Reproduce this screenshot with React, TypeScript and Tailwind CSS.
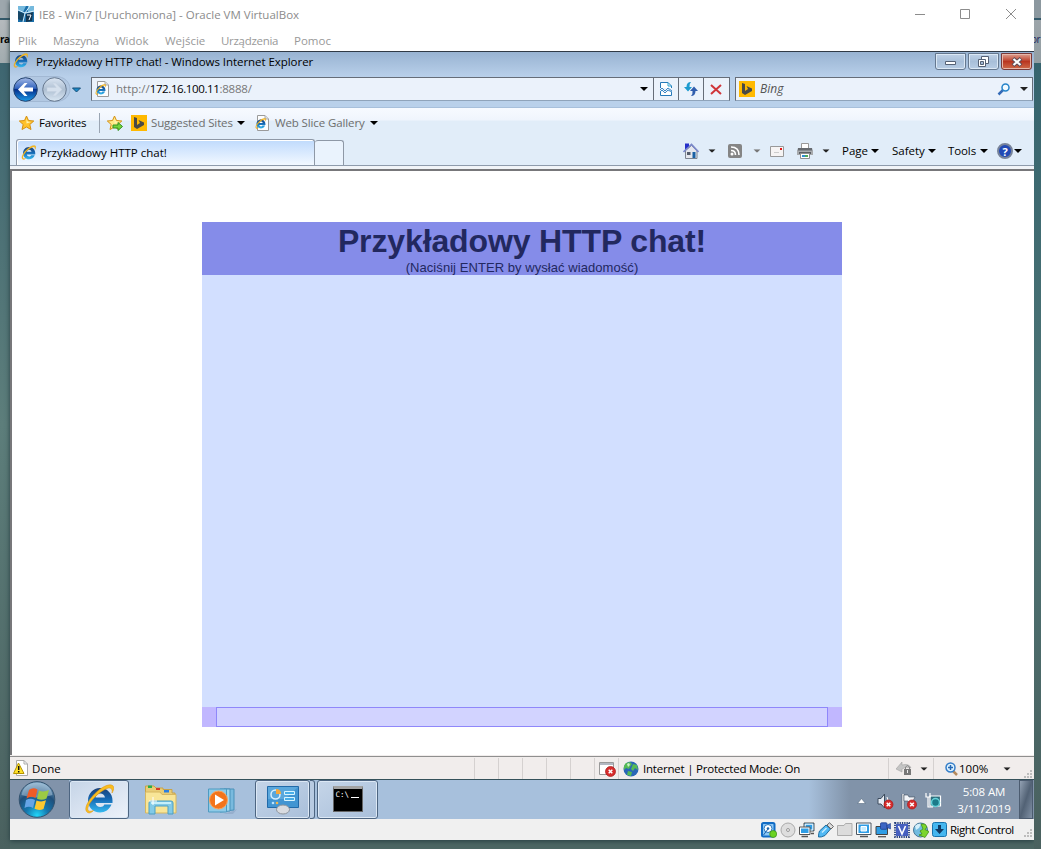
import React from "react";

type P = { className?: string };

const Svg = ({ w, h, className = "", children }: { w: number; h: number; className?: string; children: React.ReactNode }) => (
  <svg width={w} height={h} viewBox={`0 0 ${w} ${h}`} className={`block shrink-0 ${className}`}>{children}</svg>
);

const Caret = ({ className = "" }: P) => (
  <Svg w={8} h={4} className={className}><path d="M0 0H8L4 4Z" fill="currentColor" /></Svg>
);

const IeLogo = ({ size = 15, className = "" }: { size?: number; className?: string }) => (
  <svg width={size} height={size} viewBox="0 0 30 30" className={`block shrink-0 ${className}`}>
    <defs>
      <linearGradient id="ieb" x1="0" y1="0" x2="0" y2="1">
        <stop offset="0" stopColor="#1c4076" /><stop offset=".45" stopColor="#1568b4" /><stop offset="1" stopColor="#35baf0" />
      </linearGradient>
    </defs>
    <path d="M27.500 20.500C25.500 25.500 21 28.500 16 28.500C9 28.500 4 23 4 16.500S9 4 16 4S28.500 9.500 28.500 16.500V19H11.500C12 21.500 14 23 16.300 23C18.200 23 19.500 22.300 20.300 20.500ZM11.500 13.500H21C20.500 11 18.500 9.500 16.300 9.500S12 11 11.500 13.500Z" fill="url(#ieb)" />
    <path d="M5 29C-1.500 27.500 2.500 18 11 9.500S28 -1.500 29.700 3C30 5 29.300 7 28 9C28.600 5 27 3 23 4.500C15 7.500 5 18 3.800 24C3.400 27.300 6 28 9.500 26.500C8 28 6.500 29 5 29Z" fill="#f9bd20" stroke="#dc930c" strokeWidth=".5" />
  </svg>
);

const PageIe = ({ className = "" }: P) => (
  <span className={`relative block h-[16px] w-[15px] shrink-0 ${className}`}>
    <Svg w={15} h={16}><path d="M2.500 .5H10L13.500 4V15.500H2.500Z" fill="#fdfdfd" stroke="#9a9a9a" /><path d="M10 .5V4H13.500" fill="#ddd" stroke="#aaa" /></Svg>
    <IeLogo size={11} className="absolute left-0 top-[3px]" />
  </span>
);

const Bing = ({ className = "" }: P) => (
  <Svg w={16} h={16} className={className}><path d="M0 0H16V16H0Z" fill="#ffb900" /><path d="M3 2L6 3V10L9 8L7.500 5L13 7.500V10L6 14L3 12Z" fill="#4a4a46" /></Svg>
);

const Star = ({ className = "", add = false }: P & { add?: boolean }) => (
  <Svg w={16} h={16} className={className}>
    <path d="M7.500 1L9.500 5.500L14.800 6L10.800 9.500L12 14.500L7.500 12L3 14.500L4.200 9.500L.3 6L5.500 5.500Z" fill={add ? "#ffe987" : "#ffc22c"} stroke="#d59113" />
    <path d="M7.500 3L8.600 6.500L12 7L7.500 8.500Z" fill="#fff3ae" />
    {add && <path d="M6 10H11V7.500L15.500 11.500L11 15.500V13H6Z" fill="#76d33b" stroke="#319323" />}
  </Svg>
);

const RedX = ({ x, y, r = 4.500 }: { x: number; y: number; r?: number }) => (
  <g transform={`translate(${x} ${y})`}><circle r={r} fill="#d62c2c" stroke="#a81515" strokeWidth=".7" /><path d="M-1.800 -1.800L1.800 1.800M1.800 -1.800L-1.800 1.800" stroke="#fff" strokeWidth="1.500" /></g>
);

const Grip = ({ className = "" }: P) => (
  <Svg w={9} h={9} className={className}><path d="M7 0H9V2H7ZM7 3H9V5H7ZM7 6H9V8H7ZM4 3H6V5H4ZM4 6H6V8H4ZM1 6H3V8H1Z" fill="#bdbdbd" /></Svg>
);

const TitleBar = () => (
  <div className="flex h-[30px] items-center text-[11.500px] text-[#8c8c8c]">
    <Svg w={16} h={16} className="ml-2 -mt-[2px]">
      <path d="M0 0H16V16H0Z" fill="#1c6fa9" /><path d="M0 0H8L5 6L0 4ZM10 0H16V6L10 7Z" fill="#75b9dd" /><path d="M0 5L7 8L4 15L0 13Z" fill="#174766" /><path d="M8 8L15 6L14 15L8 16Z" fill="#123550" /><path d="M0 4L7 7L12 0M7 7L5 16M7 7L16 5" stroke="#d9f0fb" fill="none" /><path d="M9 9H13L11 14" stroke="#fff" fill="none" />
    </Svg>
    <span className="ml-[5px] w-[260px]">IE8 - Win7 [Uruchomiona] - Oracle VM VirtualBox</span>
    <Svg w={12} h={12} className="ml-[615px] -mt-[2px]"><path d="M1 6.500H11" stroke="#8c8c8c" /></Svg>
    <Svg w={12} h={12} className="ml-[33px] -mt-[2px]"><path d="M1.500 1.500H10.500V10.500H1.500Z" fill="none" stroke="#8c8c8c" /></Svg>
    <Svg w={12} h={12} className="ml-[34px] -mt-[2px]"><path d="M1 1L11 11M11 1L1 11" stroke="#8c8c8c" /></Svg>
  </div>
);

const MenuBar = () => (
  <div className="flex h-[21px] items-center pl-2 text-[11.500px] text-[#999]">
    <span className="w-[35px]">Plik</span>
    <span className="w-[62px] tracking-[-0.1px]">Maszyna</span>
    <span className="w-[50px]">Widok</span>
    <span className="w-[56px]">Wejście</span>
    <span className="w-[73px] tracking-[-0.3px]">Urządzenia</span>
    <span>Pomoc</span>
  </div>
);

const capBtn = "flex h-[17px] items-center justify-center rounded-b-[3px] border border-[#65788f] shadow-[inset_0_0_0_1px_#dbe8f5]";

const IeTitle = () => (
  <div className="flex h-[25px] items-start">
    <IeLogo size={15} className="ml-[3px] mt-[1px]" />
    <span className="ml-[8px] mt-[1px] w-[300px] text-[11.500px] leading-[18px] tracking-[-0.05px]">Przykładowy HTTP chat! - Windows Internet Explorer</span>
    <span className={`${capBtn} ml-[599px] mt-[1px] w-[31px] bg-gradient-to-b from-[#bfd1e6] via-[#a8bfd9] to-[#b8cde4]`}><Svg w={12} h={6} className="mt-[3px]"><path d="M.5 1.500H10.500V4.500H.5Z" fill="#fff" stroke="#556174" /></Svg></span>
    <span className={`${capBtn} ml-[2px] mt-[1px] w-[31px] bg-gradient-to-b from-[#bfd1e6] via-[#a8bfd9] to-[#b8cde4]`}><Svg w={13} h={12}><path d="M4.500 .5H11.500V7.500H4.500Z" fill="#fff" stroke="#556174" /><path d="M1.500 3.500H8.500V10.500H1.500Z" fill="#fff" stroke="#556174" /><path d="M3.500 5.500H6.500V8.500H3.500Z" fill="#9db5d1" stroke="#556174" /></Svg></span>
    <span className="ml-[2px] mt-[1px] flex h-[17px] w-[31px] items-center justify-center rounded-b-[3px] border border-[#7a3a39] bg-gradient-to-b from-[#dc9f91] via-[#b93520] to-[#ce6949] shadow-[inset_0_0_0_1px_#e6b7aa]"><Svg w={12} h={10}><path d="M2 1.500L10 8.500M10 1.500L2 8.500" stroke="#5c4c58" strokeWidth="4" /><path d="M2.500 2L9.500 8M9.500 2L2.500 8" stroke="#fff" strokeWidth="2.200" /></Svg></span>
  </div>
);

const toolCell = "flex h-[22px] items-center justify-center border-l border-[#666d78]";

const NavBar = () => (
  <div className="flex h-[30px] items-start">
    <Svg w={72} h={28} className="mt-[-2px] ml-[2px]">
      <defs>
        <linearGradient id="bk" x1="0" y1="0" x2="0" y2="1"><stop offset="0" stopColor="#a3b8e4" /><stop offset=".45" stopColor="#3465bf" /><stop offset=".5" stopColor="#052f8c" /><stop offset="1" stopColor="#1b9be7" /></linearGradient>
        <linearGradient id="fw" x1="0" y1="0" x2="0" y2="1"><stop offset="0" stopColor="#dbe6f3" /><stop offset=".5" stopColor="#aebfd2" /><stop offset="1" stopColor="#dae7f3" /></linearGradient>
      </defs>
      <path d="M13 1.500H44C52 1.500 58 7 58 14S52 26.500 44 26.500H13Z" fill="#b2c8e2" stroke="#a2b8d3" />
      <circle cx="13.500" cy="14.500" r="11.800" fill="url(#bk)" stroke="#23436f" />
      <circle cx="42.500" cy="14.500" r="11.800" fill="url(#fw)" stroke="#66788f" />
      <path d="M6 14.500L12.500 8H15.500L11.800 12.500H21V16.500H11.800L15.500 21H12.500Z" fill="#fff" />
      <path d="M50 14.500L43.500 8H40.500L44.200 12.500H35V16.500H44.200L40.500 21H43.500Z" fill="#d5e0ed" stroke="#c2cfde" strokeWidth=".5" />
      <path d="M60.500 13H68.500L64.500 17Z" fill="#1b8ac9" stroke="#164e78" />
    </Svg>
    <div className="ml-[7px] flex h-[24px] w-[639px] items-center border border-[#666d78] border-b-[#8fa3ba] bg-[#ebf2fb]">
      <PageIe className="ml-[3px]" />
      <span className="ml-[6px] w-[518px] text-[11.500px] text-[#777]">http://<span className="tracking-[-0.4px] text-black">172.16.100.11</span><span className="tracking-[-0.2px]">:8888/</span></span>
      <Caret className="ml-[6px]" />
      <span className={`${toolCell} ml-[5px] w-[25px]`}>
        <Svg w={12} h={14}><path d="M.5 6V.5H8L11.500 4V6M.5 10V13.500H11.500V10" fill="#fff" stroke="#2679b8" /><path d="M8 .5V4H11.500" fill="none" stroke="#2ba5d3" /><path d="M0 8L2 6L5 9L8 6L12 9M0 10L2 8L5 11L8 8L12 10" fill="none" stroke="#3d89c4" /></Svg>
      </span>
      <span className={`${toolCell} w-[25px]`}>
        <Svg w={14} h={14}><path d="M7 0Q2.500 0 2.500 5H0L4 9.500L8 5H5.500Q5 2 7 0Z" fill="#1d9bcf" /><path d="M7 14Q11.500 14 11.500 9H14L10 4.500L6 9H8.500Q9 12 7 14Z" fill="#315eae" /></Svg>
      </span>
      <span className={`${toolCell} w-[25px]`}>
        <Svg w={12} h={11}><path d="M1 1L11 10M11 1L1 10" stroke="#d0353a" strokeWidth="2" /></Svg>
      </span>
    </div>
    <div className="ml-[5px] flex h-[24px] w-[298px] items-center border border-[#666d78] border-b-[#8fa3ba] bg-[#ebf2fb]">
      <Bing className="ml-[3px]" />
      <span className="ml-[5px] w-[232px] text-[12px] italic text-[#555]">Bing</span>
      <Svg w={14} h={13} className="ml-[5px]"><path d="M6 7L1.500 11.500" stroke="#356bb7" strokeWidth="2.500" /><circle cx="8.500" cy="4.500" r="3.500" fill="#f1faff" stroke="#2583c9" strokeWidth="1.500" /></Svg>
      <Caret className="ml-[9px] text-[#222]" />
    </div>
  </div>
);

const FavoritesBar = () => (
  <div className="flex h-[31px] items-center bg-[linear-gradient(to_bottom,#f7faff_0px,#f0f5fd_12px,#e1edf9_13px)] pb-px text-[11.500px] text-[#6d6d6d]">
    <Star className="ml-[9px]" />
    <span className="ml-[4px] w-[50px] tracking-[-0.15px] text-black">Favorites</span>
    <span className="ml-[10px] h-[20px] w-px bg-[#9aa5b3]" />
    <Star add className="ml-[7px]" />
    <Bing className="ml-[8px]" />
    <span className="ml-[4px] w-[86px] tracking-[-0.12px]">Suggested Sites</span>
    <Caret className="text-black" />
    <PageIe className="ml-[10px]" />
    <span className="ml-[5px] w-[95px] tracking-[-0.12px]">Web Slice Gallery</span>
    <Caret className="text-black" />
  </div>
);

const Home = ({ className = "" }: P) => (
  <Svg w={16} h={17} className={className}><path d="M2.500 7.500L8.500 2.500L14 7.500V15.500H2.500Z" fill="#e5e7ee" stroke="#7c8490" /><path d="M.5 9L8.500 1.500L15.500 9" stroke="#7b88c9" strokeWidth="1.700" fill="none" /><path d="M2 .5H6V3L2 6.500Z" fill="#2530ca" /><path d="M4 9H7.500V12H4Z" fill="#555d6b" /><path d="M9.500 9H12.500V15H9.500Z" fill="#1960a4" /></Svg>
);

const TabRow = () => (
  <div className="flex h-[27px] items-end border-b border-[#8e9bac] bg-[#e1edf9]">
    <div className="ml-[6px] flex h-[26px] w-[299px] items-center rounded-t-[3px] border border-b-0 border-[#8e98a6] bg-gradient-to-b from-[#bfdafc] to-[#f2f8ff] shadow-[inset_1px_1px_0_#fff]">
      <IeLogo size={15} className="ml-[4px]" />
      <span className="ml-[4px] text-[11.500px]">Przykładowy HTTP chat!</span>
    </div>
    <div className="h-[25px] w-[29px] rounded-t-[3px] border border-b-0 border-l-0 border-[#8e98a6] bg-[#eaf3fd]" />
    <div className="mb-[2px] ml-[339px] flex h-[24px] items-center text-[11.500px] text-black">
      <Home />
      <Caret className="ml-[9px] scale-[.9] text-[#222]" />
      <Svg w={14} h={14} className="ml-[12px]"><rect width="14" height="14" rx="2" fill="#858585" /><path d="M3 3Q11 3 11 11M3 6.500Q7.500 6.500 7.500 11" fill="none" stroke="#fff" strokeWidth="1.600" /><circle cx="4" cy="10" r="1.500" fill="#fff" /></Svg>
      <Caret className="ml-[11px] scale-[.9] text-[#777]" />
      <Svg w={14} h={11} className="ml-[9px]"><path d="M.5 .5H13.500V10.500H.5Z" fill="#f6f4f4" stroke="#999" /><path d="M10 2H12V4H10Z" fill="#e21a1a" /><path d="M4 6.500H9" stroke="#ccc" /></Svg>
      <Svg w={16} h={16} className="ml-[13px]"><path d="M4.500 .5H11.500V6H4.500Z" fill="#fff" stroke="#999" /><path d="M1 5H15L16 10H0Z" fill="#676b70" /><path d="M0 7.500H16V12H0Z" fill="#a8abae" /><path d="M2 9H14V11H2Z" fill="#5c5f63" /><path d="M3.500 10.500H12.500V15.500H3.500Z" fill="#fff" stroke="#8f8f8f" /><path d="M5 12H8V14H5Z" fill="#2e8ed0" /><path d="M8 12H11V14H8Z" fill="#50a95b" /></Svg>
      <Caret className="ml-[9px] scale-[.9] text-[#222]" />
      <span className="ml-[12px] w-[29px]">Page</span><Caret />
      <span className="ml-[13px] w-[36px]">Safety</span><Caret />
      <span className="ml-[12px] w-[32px] tracking-[-0.1px]">Tools</span><Caret />
      <span className="ml-[9px] flex h-[16px] w-[16px] items-center justify-center rounded-full border-2 border-[#77839a] bg-[#2149b5] text-[11px] font-bold leading-none text-white">?</span>
      <Caret className="ml-px" />
    </div>
  </div>
);

const PageContent = () => (
  <div className="h-[586px] border-l-2 border-t-2 border-[#77777a] bg-white pt-[51px]">
    <div className="ml-[190px] w-[640px]" style={{ fontFamily: '"Liberation Sans", Arial, sans-serif' }}>
      <div className="h-[53px] bg-[#858ce9] text-center text-[#22285f]">
        <h1 className="pt-px text-[32px] font-bold leading-[37px] tracking-[-0.13px]">Przykładowy HTTP chat!</h1>
        <p className="text-[13px] leading-[15px] tracking-[0.06px]">(Naciśnij ENTER by wysłać wiadomość)</p>
      </div>
      <div className="h-[432px] bg-[#d2dfff]" />
      <div className="flex h-[20px] justify-center bg-[#c1b7ff]"><div className="w-[612px] border border-[#8f87fa] bg-[#d2d3ff]" /></div>
    </div>
  </div>
);

const Sep = ({ className = "" }: P) => <span className={`h-[21px] w-px shrink-0 bg-[#d5d1d0] ${className}`} />;

const StatusBar = () => (
  <div className="flex h-[24px] items-center border-b border-t border-b-[#35515a] border-t-[#8f8f8f] bg-[#f1edec] pt-px text-[11.500px]">
    <Svg w={15} h={16} className="ml-[3px] -mt-px"><path d="M3.500 .5H11L14.500 4V15.500H3.500Z" fill="#fff" stroke="#aaa" /><path d="M11 .5V4H14.500" fill="none" stroke="#aaa" /><path d="M5.500 3L11 13.500H.5Z" fill="#ffe12b" stroke="#b69400" /><path d="M5.700 6V10M5.700 11V12.500" stroke="#111" strokeWidth="1.500" /></Svg>
    <span className="ml-[4px] w-[442px]">Done</span>
    {[0, 1, 2, 3, 4].map((i) => <Sep key={i} className="mr-[23px]" />)}
    <Sep />
    <Svg w={17} h={16} className="ml-[4px]"><path d="M.5 1.500H14.500V13.500H.5Z" fill="#fff" stroke="#999" /><path d="M1 2H14V4H1Z" fill="#b3b8c2" /><RedX x={11.500} y={10.500} r={5} /></Svg>
    <Sep className="ml-[2px]" />
    <Svg w={16} h={16} className="ml-[4px]"><circle cx="8" cy="8" r="7.500" fill="#2966b7" /><path d="M3 2L7 1L9 3L7 6L6 8L3 7L1 9Q0 5 3 2ZM10 3L14 4L15 9L12 7L10 10L8 8ZM5 10L9 11L8 15L4 14Z" fill="#55ba55" /><path d="M4 3L6 2L7 4L5 6Z" fill="#caf5c4" /></Svg>
    <span className="ml-[4px] w-[245px] tracking-[-0.22px]">Internet | Protected Mode: On</span>
    <Sep />
    <Svg w={17} h={15} className="ml-[7px]"><path d="M0 8L6 1V4Q13 2 15 7Q10 5 6 8V11Z" fill="#c4c4c4" stroke="#999" strokeWidth=".5" /><path d="M8 8H15V14H8Z" fill="#777" /><path d="M9.500 8V6Q11.500 3 13.500 6V8" fill="none" stroke="#888" /><path d="M11.500 9V12" stroke="#eee" /></Svg>
    <Caret className="ml-[7px] scale-[.9] text-[#222]" />
    <Sep className="ml-[5px]" />
    <Svg w={13} h={14} className="ml-[11px]"><path d="M7 8L12 13" stroke="#b58a5e" strokeWidth="2.500" /><circle cx="5.500" cy="5.500" r="4.500" fill="#dff3ff" stroke="#347dc8" strokeWidth="1.500" /><path d="M3 5.500H8M5.500 3V8" stroke="#2668b4" strokeWidth="1.500" /></Svg>
    <span className="ml-px w-[44px]">100%</span>
    <Caret className="scale-[.9] text-[#222]" />
    <Grip className="ml-[12px] mt-[12px]" />
  </div>
);

const Orb = () => (
  <Svg w={38} h={38} className="ml-[8px] -mt-px">
    <defs><radialGradient id="orb" cx=".5" cy=".95" r=".9"><stop offset="0" stopColor="#22d7fa" /><stop offset=".35" stopColor="#1577ae" /><stop offset=".7" stopColor="#204f7a" /><stop offset="1" stopColor="#719cbd" /></radialGradient></defs>
    <circle cx="19" cy="19.500" r="17.800" fill="url(#orb)" stroke="#34536f" />
    <path d="M3.500 15Q6 3 19 2.500Q32 3 34.500 15Q19 20 3.500 15Z" fill="#d5e5f2" opacity=".4" />
    <path d="M11 10Q15 7 19.500 9.500L17.500 18Q13 15.500 8.500 18.500Z" fill="#ee5c27" />
    <path d="M21 10.500Q25.500 12.500 31 10L28.500 18.500Q24 21 19 18.800Z" fill="#9cca43" />
    <path d="M8 20Q12.500 17.500 17 20L15 28Q11 25.500 6.500 28Z" fill="#66a4e6" />
    <path d="M18.500 20.500Q23.500 22.500 28 20.300L25.500 29Q21 31 16.500 28.800Z" fill="#fdc830" />
  </Svg>
);

const taskBtn = "flex h-[39px] items-center justify-center rounded-[3px] border border-[#4d6581] shadow-[inset_0_0_0_1px_#dce8f5]";

const Taskbar = () => (
  <div className="flex h-[39px] items-center bg-gradient-to-r from-[#a7c0dc] from-78% to-[#8193a9] to-82%">
    <div className="flex h-full w-[59px] items-center bg-[#8193aa]"><Orb /></div>
    <div className={`${taskBtn} w-[60px] bg-gradient-to-br from-[#c5d4e7] to-[#edf2fa]`}><IeLogo size={30} className="-mt-px" /></div>
    <Svg w={34} h={32} className="ml-[15px]">
      <path d="M1.500 5V2H10L12 4H19V5.500H28V9H31V28H1.500Z" fill="#e9cd76" stroke="#c8a348" /><path d="M4 1.500H8V4H4Z" fill="#28ad49" /><path d="M12 4H16V6H12Z" fill="#d83c24" /><path d="M20 6H25V8.500H20Z" fill="#2b7fe1" />
      <path d="M1.500 8H16L18 10.500H32V29H1.500Z" fill="#f8e597" stroke="#d6b760" />
      <path d="M5 19Q5 17 7 17H27Q29 17 29 19V30H24V22H11V30H5Z" fill="#83cae6" stroke="#4a9fc5" /><path d="M7 19H27" stroke="#c6effa" strokeWidth="2" /><path d="M9 13V21M5 17H13" stroke="#fff" />
    </Svg>
    <Svg w={32} h={30} className="ml-[29px]">
      <path d="M26 26L30 24L26 29H16Z" fill="#8aa4c4" opacity=".6" />
      <path d="M17 4H27V25L17 26Z" fill="#79bade" stroke="#4a91b9" /><path d="M13 4H23V26L13 27Z" fill="#9fd7ef" stroke="#4a91b9" /><path d="M1.500 4H19.500V27H1.500Z" fill="#8ecae7" stroke="#4d9bc1" />
      <circle cx="11.500" cy="15" r="9" fill="#f2741b" stroke="#fca45c" /><path d="M8 9.500L17 15L8 20.500Z" fill="#fff" />
    </Svg>
    <div className={`${taskBtn} ml-[16px] w-[55px] bg-gradient-to-br from-[#c5d5e8] to-[#a9bfda]`}>
      <Svg w={34} h={30}><path d="M1.500 1.500H32.500V22.500H1.500Z" fill="#4295d2" stroke="#216aa9" /><path d="M2 2H32L19 14H2Z" fill="#5aa7dc" /><circle cx="9.500" cy="9.500" r="4.500" fill="none" stroke="#d9f0ff" strokeWidth="1.500" /><path d="M10 9V4Q15 4 15 9Z" fill="#f6a83d" /><path d="M18.500 6.500H28.500V9.500H18.500ZM18.500 12.500H28.500V15.500H18.500Z" fill="#49aee8" stroke="#d9f5ff" /><circle cx="7" cy="18" r="1.300" fill="#b8e2ff" /><circle cx="11" cy="18" r="1.300" fill="#f5b64a" /><ellipse cx="17" cy="24.500" rx="6.500" ry="4.500" fill="#d8dbe0" stroke="#8c939b" /></Svg>
    </div>
    <div className="h-[39px] w-[5px] rounded-r-[3px] border border-l-0 border-[#4d6581] bg-[#b8cbe2]" />
    <div className={`${taskBtn} ml-[2px] w-[61px] bg-gradient-to-br from-[#c5d5e8] to-[#a9bfda]`}>
      <span className="-mt-px flex h-[26px] w-[30px] items-start border border-[#666] border-t-[3px] border-t-[#a3a3a3] bg-black pl-[2px] text-[7.500px] leading-[12px] text-white" style={{ fontFamily: '"DejaVu Sans Mono", monospace' }}>
        <span>C:\</span><span className="ml-[2px] mt-[8px] h-px w-[8px] bg-white" />
      </span>
    </div>
    <div className="ml-[479px] flex h-full items-center">
      <Svg w={9} h={6} className="mt-[2px]"><path d="M4.500 .5L8.500 5.500H.5Z" fill="#fff" stroke="#566b81" strokeWidth=".6" /></Svg>
      <Svg w={17} h={17} className="ml-[11px] mt-[3px]"><path d="M1 5.500H4L7.500 1V15L4 11H1Z" fill="#e9eef5" stroke="#3e4d5f" /><path d="M10 4Q12 7 10 11" stroke="#fff" fill="none" /><RedX x={11.500} y={11.500} /></Svg>
      <Svg w={17} h={17} className="ml-[7px] mt-[3px]"><path d="M2 1V16" stroke="#3c4b5c" strokeWidth="2.500" /><path d="M2 1V16" stroke="#fff" strokeWidth="1.400" /><path d="M3 2H7L8 4H14L12.500 7L14 10H8L7 8H3Z" fill="#f2f5f9" stroke="#3c4b5c" strokeWidth=".6" /><RedX x={11} y={11.500} /></Svg>
      <Svg w={17} h={17} className="ml-[7px] mt-[2px]"><path d="M5 4H15.500V14H5Z" fill="#2d6d7c" stroke="#fff" strokeWidth="1.200" /><circle cx="10.500" cy="10.500" r="4" stroke="#66d1d8" strokeWidth="1.500" fill="#1c7b8a" /><path d="M1 1V5H5V1M3 5V15H8" stroke="#fff" fill="none" strokeWidth="1.200" /></Svg>
      <div className="ml-[12px] w-[60px] whitespace-nowrap text-center text-[11.500px] leading-[17px] tracking-[-0.1px] text-white">5:08 AM<br />3/11/2019</div>
      <div className="ml-[5px] h-[39px] w-[14px] border border-[#4c5c70] bg-gradient-to-br from-[#93a1b3] via-[#526275] to-[#8191a5]" />
    </div>
  </div>
);

const VmStatus = () => (
  <div className="flex h-[21px] items-center gap-[3px] bg-[#f0f0f0] pl-[751px] text-[11.500px]">
    <Svg w={16} h={16}><rect x="1" y="1" width="12.500" height="13.500" rx="1.500" fill="#8cc8f7" stroke="#116cc5" strokeWidth="2" /><circle cx="7" cy="6.500" r="4" fill="#fff" stroke="#2776bb" /><circle cx="7" cy="6.500" r="1.300" fill="#1b65ac" /><path d="M2.500 13L7 7" stroke="#1b65ac" /><circle cx="12.200" cy="12" r="3.500" fill="#6bd323" stroke="#398b19" strokeWidth=".7" /></Svg>
    <Svg w={16} h={16}><circle cx="8" cy="8" r="7" fill="#dedede" stroke="#aaa" /><circle cx="8" cy="8" r="1.500" fill="#eee" stroke="#999" /></Svg>
    <Svg w={16} h={16}><path d="M5 1H15V9H5Z" fill="#36a2e8" stroke="#555" strokeWidth="1" /><path d="M6.200 2.200H13.800V8H6.200Z" fill="#2f9de5" stroke="#fff" strokeWidth="1" /><path d="M.5 5H11V12.500H.5Z" fill="#fff" stroke="#555" /><path d="M2 6.500H9.500V11H2Z" fill="#2f9de5" /><path d="M12 11.500H15M2.500 14.500H9" stroke="#555" strokeWidth="1.300" /></Svg>
    <Svg w={16} h={16}><path d="M1.500 9L8 3L12.500 7L7 13.500Q3 15.500 .5 15Q.5 11 1.500 9Z" fill="#51b9f4" stroke="#1f6d9f" /><path d="M9 3L11.500 .8L15.500 4.500L13 7Z" fill="#ddd" stroke="#666" /><path d="M4 10.500L8.500 6" stroke="#c7ecff" strokeWidth="1.500" /></Svg>
    <Svg w={16} h={16}><path d="M.5 13.500V3.500H7L8.500 1.500H15V13.500Z" fill="#dcdcdc" stroke="#adadad" /></Svg>
    <Svg w={16} h={16}><path d="M.5 1H15V12.500H.5Z" fill="#fff" stroke="#4e5962" /><path d="M2.500 2.500H13V11H2.500Z" fill="#2f9de5" /><path d="M5 4.500H10.500V9H5Z" fill="#c7edff" stroke="#fff" /><path d="M4 14.500H12" stroke="#555" strokeWidth="1.500" /></Svg>
    <Svg w={16} h={16}><path d="M1 4.500H12.500V12.500H1Z" fill="#2f9de5" stroke="#444" /><rect x="5.500" y=".8" width="6.500" height="6.500" rx="1" fill="#3c66c4" stroke="#223e8e" strokeWidth=".8" /><path d="M12 3L15.500 1.500V7L12 5.500Z" fill="#3c66c4" stroke="#223e8e" strokeWidth=".6" /><path d="M3 14.700H11" stroke="#555" strokeWidth="1.300" /></Svg>
    <Svg w={16} h={16}><rect x="1" y="1" width="14" height="14" fill="none" stroke="#27407c" strokeDasharray="1.300 1" strokeWidth="1.800" /><rect x="2" y="2" width="12" height="12" fill="#465fc0" /><path d="M4.500 4L8 12L11.500 4" fill="none" stroke="#fff" strokeWidth="1.600" /></Svg>
    <Svg w={16} h={16}><circle cx="7.500" cy="8" r="7" fill="#72bce0" stroke="#477798" /><path d="M2 4Q5 1 8 2L6 6L3 8Z" fill="#d5effa" /><path d="M8 2L12 2L14 5L12 7.500L16 9.500L12 15.500L6 13L9 12L7 9L10 7Z" fill="#7bd52e" stroke="#398611" strokeWidth=".7" /></Svg>
    <Svg w={16} h={16}><rect x=".5" y=".5" width="14" height="14" rx="2" fill="#45b6ef" stroke="#1773ae" /><path d="M6 3H9V7H12L7.500 12L3 7H6Z" fill="#103b65" /></Svg>
    <span className="-ml-px w-[70px] tracking-[-0.5px]">Right Control</span>
    <Grip className="mt-[8px]" />
  </div>
);

export default function App() {
  return (
    <div className="flex h-[849px] w-[1041px] overflow-hidden whitespace-nowrap bg-[#4c6663] text-black antialiased" style={{ fontFamily: '"Open Sans", "Noto Sans", sans-serif' }}>
      <div className="h-full w-[10px] shrink-0 overflow-hidden bg-gradient-to-b from-[#39626f] via-[#5d7e7b] to-[#4a615f] text-[10px] font-bold">
        <div className="h-[18px] bg-[#9da7ad]" />
        <div className="h-[45px] border-t-2 border-[#33596a] bg-gradient-to-b from-[#b5babd] to-[#a2acaf] pt-[12px] tracking-[-0.5px]">ra</div>
      </div>
      <div className="h-[840px] w-[1024px] shrink-0 bg-white shadow-[0_1px_5px_#253c40]">
        <TitleBar />
        <MenuBar />
        <div className="h-[57px] border-b border-t border-b-[#a7bfdb] border-t-[#303a46] bg-[linear-gradient(to_bottom,#98b3d2_0px,#b9d0ea_25px,#b9d0ea_56px)]">
          <IeTitle />
          <NavBar />
        </div>
        <FavoritesBar />
        <TabRow />
        <div className="h-[3px] bg-[#f1f4f8]" />
        <PageContent />
        <div className="h-px bg-[#f1edec]" />
        <StatusBar />
        <Taskbar />
        <VmStatus />
      </div>
      <div className="h-full w-[7px] shrink-0 overflow-hidden bg-gradient-to-b from-[#31616d] via-[#4d7475] to-[#4a615f] text-[10px] text-[#20265d]">
        <div className="h-[18px] bg-[#8c989f]" />
        <div className="h-[45px] border-t-2 border-[#33596a] bg-gradient-to-b from-[#9da5aa] to-[#929ea3] pt-[12px]"><span className="-ml-[3px] tracking-[-0.5px]">or</span></div>
      </div>
    </div>
  );
}
